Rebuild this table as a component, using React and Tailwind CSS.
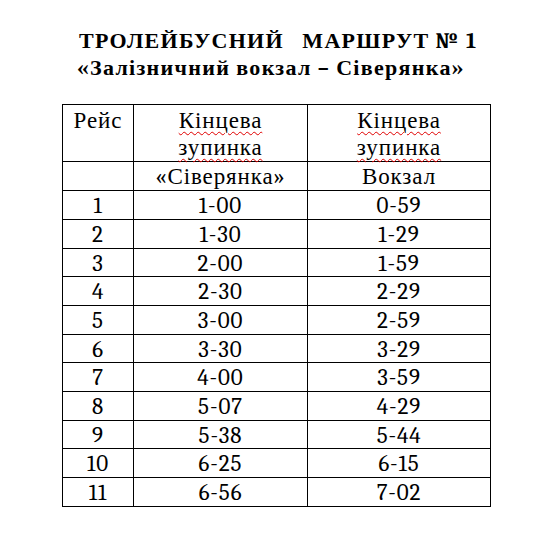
const rows = [
  ["1", "1-00", "0-59"],
  ["2", "1-30", "1-29"],
  ["3", "2-00", "1-59"],
  ["4", "2-30", "2-29"],
  ["5", "3-00", "2-59"],
  ["6", "3-30", "3-29"],
  ["7", "4-00", "3-59"],
  ["8", "5-07", "4-29"],
  ["9", "5-38", "5-44"],
  ["10", "6-25", "6-15"],
  ["11", "6-56", "7-02"],
];

function Squiggle({ children }) {
  return (
    <span className="underline decoration-wavy decoration-[#e00000] decoration-1 underline-offset-[3px]">
      {children}
    </span>
  );
}

export default function App() {
  return (
    <div className="h-[534px] w-[542px] bg-white font-serif text-black">
      <div className="pl-[79px] pt-[28px]">
        <h1 className="whitespace-pre text-[22px] font-bold leading-[27px] tracking-[1.3px]">
          ТРОЛЕЙБУСНИЙ   МАРШРУТ № 1
        </h1>
        <h2 className="-ml-[2px] text-[22px] font-bold leading-[27px] tracking-[1.3px]">
          «Залізничний вокзал – Сіверянка»
        </h2>
      </div>

      <table className="ml-[62px] mt-[22px] w-[428px] table-fixed border-collapse text-[23px] tracking-[0.9px]">
        <colgroup>
          <col className="w-[71px]" />
          <col className="w-[174px]" />
          <col className="w-[183px]" />
        </colgroup>
        <tbody>
          <tr>
            <td className="border border-black pt-[2px] text-center align-top leading-[27.2px]">
              Рейс
            </td>
            <td className="border border-black pt-[2px] text-center align-top leading-[27.2px]">
              <Squiggle>Кінцева</Squiggle>
              <br />
              <Squiggle>зупинка</Squiggle>
            </td>
            <td className="border border-black pt-[2px] text-center align-top leading-[27.2px]">
              <Squiggle>Кінцева</Squiggle>
              <br />
              <Squiggle>зупинка</Squiggle>
            </td>
          </tr>
          <tr>
            <td className="border border-black pt-[2px] text-center leading-[25.7px]"></td>
            <td className="border border-black pt-[2px] text-center leading-[25.7px]">«Сіверянка»</td>
            <td className="border border-black pt-[2px] text-center leading-[25.7px]">Вокзал</td>
          </tr>
          {rows.map((r) => (
            <tr key={r[0]}>
              {r.map((c, i) => (
                <td key={i} className="border border-black pt-[2px] text-center leading-[25.7px]">
                  {c}
                </td>
              ))}
            </tr>
          ))}
        </tbody>
      </table>
    </div>
  );
}
